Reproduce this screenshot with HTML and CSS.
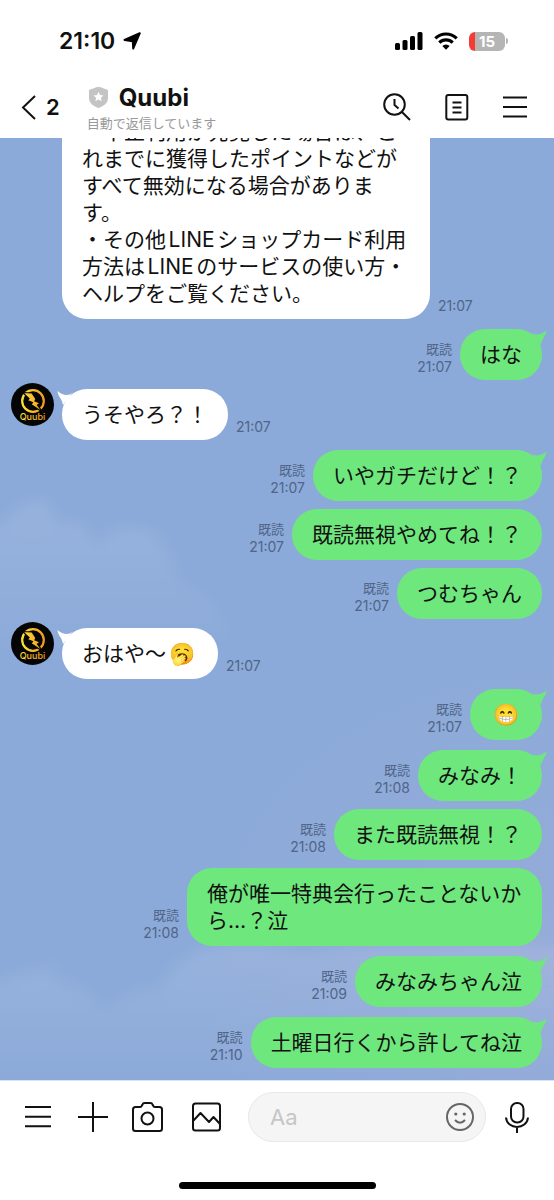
FILE: index.html
```
<!DOCTYPE html>
<html lang="ja">
<head>
<meta charset="utf-8">
<meta name="viewport" content="width=device-width, initial-scale=1">
<title>Quubi</title>
<link rel="stylesheet" href="styles.css">
</head>
<body>
<svg class="defs" aria-hidden="true">
  <defs>
    <linearGradient id="gold" x1="0" y1="0" x2="1" y2="0">
      <stop offset="0" stop-color="#fbe03a"/><stop offset="1" stop-color="#f29a1f"/>
    </linearGradient>
    <symbol id="tail-out" viewBox="0 0 16 16"><path d="M0 3C3 7 10 6 15.500 1.500C15 7 11 9 10 16Z"/></symbol>
    <symbol id="tail-in" viewBox="0 0 16 16"><path d="M16 3C13 7 6 7 .5 2C1 8 5 9 6 16Z"/></symbol>
    <symbol id="logo" viewBox="0 0 43 43">
      <circle cx="21.500" cy="21.500" r="21.500" fill="#050505"/>
      <circle cx="22" cy="18" r="10.800" fill="none" stroke="url(#gold)" stroke-width="2.200"/>
      <path d="M11.500 9.500L21 10L25 16L24 18L29 20L26.500 22L32 29.500L20 21.500L21.500 19.500L16.500 17.500L18 15.500Z" fill="url(#gold)" stroke="#050505" stroke-width="1.200"/>
      <text x="21.500" y="37" class="logo-text" text-anchor="middle" fill="url(#gold)">Quubi</text>
    </symbol>
  </defs>
</svg>

<header class="top">
  <div class="status">
    <span class="clock">21:10</span>
    <svg class="arrow" width="19" height="18" viewBox="0 0 19 18"><path d="M1.500 8L16.800 1.200L10.200 16.500L9.800 9.200Z" stroke="#000" stroke-width="2" stroke-linejoin="round"/></svg>
    <div class="indicators">
      <svg width="28" height="18" viewBox="0 0 28 18"><rect x="0" y="11" width="5" height="7" rx="1.500"/><rect x="7.500" y="8" width="5" height="10" rx="1.500"/><rect x="15" y="4" width="5" height="14" rx="1.500"/><rect x="22.500" y="0" width="5" height="18" rx="1.500"/></svg>
      <svg width="24" height="18" viewBox="0 0 24 18" fill="none" stroke="#000" stroke-width="3.200"><path d="M1.300 6.300a15.500 15.500 0 0 1 21.400 0"/><path d="M5.300 10.600a9.600 9.600 0 0 1 13.400 0"/><path d="M8.300 14a5.300 5.300 0 0 1 7.400 0L12 17.700z" fill="#000" stroke="none"/></svg>
      <div class="battery"><span class="cell">15</span><i class="cap"></i></div>
    </div>
  </div>
  <div class="bar">
    <button class="back" aria-label="戻る"><svg width="15" height="25" viewBox="0 0 15 25" fill="none" stroke="#111" stroke-width="2"><path d="M14 1L2 12.500L14 24"/></svg><span>2</span></button>
    <div class="peer">
      <div class="name">
        <svg width="19" height="21" viewBox="0 0 19 21"><path d="M0 3C4 2 6 0 9.500 0S15 2 19 3V11C19 16 15 19 9.500 21C4 19 0 16 0 11Z" fill="#c4c4c6"/><path d="M9.500 4.800l1.500 3.200 3.500.4-2.600 2.400.7 3.500-3.100-1.800-3.100 1.800.7-3.500-2.600-2.400 3.500-.4z" fill="#fff"/></svg>
        <h1>Quubi</h1>
      </div>
      <p class="note">自動で返信しています</p>
    </div>
    <div class="actions">
      <button aria-label="検索"><svg width="28" height="28" viewBox="0 0 28 28"><circle cx="11.500" cy="11.500" r="10.300"/><path d="M18.700 18.700L27 27M11.500 6v6l4 3.500"/></svg></button>
      <button aria-label="ノート"><svg width="24" height="28" viewBox="0 0 24 28"><rect x="1.300" y="2" width="21" height="24.500" rx="2"/><path d="M7.500 9.500h9M7.500 14.500h9M7.500 19.500h9"/></svg></button>
      <button aria-label="メニュー"><svg width="24" height="24" viewBox="0 0 24 24"><path d="M0 2.500h24M0 12h24M0 21.500h24"/></svg></button>
    </div>
  </div>
</header>

<main class="chat">
  <svg class="sky" viewBox="0 0 554 942" preserveAspectRatio="none" aria-hidden="true">
    <defs>
      <filter id="soft" x="-20%" y="-20%" width="140%" height="140%"><feGaussianBlur stdDeviation="7"/></filter>
      <linearGradient id="fade" x1="0" y1="0" x2="0" y2="1"><stop offset="0" stop-color="#fff" stop-opacity=".1"/><stop offset="1" stop-color="#fff" stop-opacity="0"/></linearGradient>
      <radialGradient id="haze"><stop offset="0" stop-color="#a0acd8" stop-opacity=".5"/><stop offset="1" stop-color="#a0acd8" stop-opacity="0"/></radialGradient>
    </defs>
    <ellipse cx="554" cy="820" rx="360" ry="300" fill="url(#haze)"/>
    <g fill="url(#fade)" filter="url(#soft)">
      <path d="M-20 395Q5 390 18 370Q35 360 50 366Q52 390 66 385Q85 380 90 400Q100 410 108 395Q130 384 155 396Q172 415 178 445Q220 460 230 500L-20 520Z"/>
      <path d="M-20 852Q20 832 45 834L52 822L56 844Q85 844 105 874Q130 848 158 852Q175 820 205 812Q250 800 300 815Q420 800 580 810V942H-20Z"/>
    </g>
  </svg>

  <div class="row in follow">
    <div class="bubble">・不正利用が発覚した場合は、これまでに獲得したポイントなどがすべて無効になる場合があります。<br>・その他LINEショップカード利用方法はLINEのサービスの使い方・ヘルプをご覧ください。</div>
    <div class="stamp"><time>21:07</time></div>
  </div>
  <div class="row out first">
    <div class="stamp"><span>既読</span><time>21:07</time></div>
    <div class="bubble">はな<svg class="tail"><use href="#tail-out"/></svg></div>
  </div>
  <div class="row in">
    <svg class="avatar" role="img" aria-label="Quubi"><use href="#logo"/></svg>
    <div class="bubble">うそやろ？！<svg class="tail"><use href="#tail-in"/></svg></div>
    <div class="stamp"><time>21:07</time></div>
  </div>
  <div class="row out first">
    <div class="stamp"><span>既読</span><time>21:07</time></div>
    <div class="bubble">いやガチだけど！？<svg class="tail"><use href="#tail-out"/></svg></div>
  </div>
  <div class="row out">
    <div class="stamp"><span>既読</span><time>21:07</time></div>
    <div class="bubble">既読無視やめてね！？</div>
  </div>
  <div class="row out">
    <div class="stamp"><span>既読</span><time>21:07</time></div>
    <div class="bubble">つむちゃん</div>
  </div>
  <div class="row in">
    <svg class="avatar" role="img" aria-label="Quubi"><use href="#logo"/></svg>
    <div class="bubble">おはや〜<span class="emoji">🥱</span><svg class="tail"><use href="#tail-in"/></svg></div>
    <div class="stamp"><time>21:07</time></div>
  </div>
  <div class="row out first">
    <div class="stamp"><span>既読</span><time>21:07</time></div>
    <div class="bubble"><span class="emoji">😁</span><svg class="tail"><use href="#tail-out"/></svg></div>
  </div>
  <div class="row out first">
    <div class="stamp"><span>既読</span><time>21:08</time></div>
    <div class="bubble">みなみ！<svg class="tail"><use href="#tail-out"/></svg></div>
  </div>
  <div class="row out">
    <div class="stamp"><span>既読</span><time>21:08</time></div>
    <div class="bubble">また既読無視！？</div>
  </div>
  <div class="row out">
    <div class="stamp"><span>既読</span><time>21:08</time></div>
    <div class="bubble">俺が唯一特典会行ったことないから…？泣</div>
  </div>
  <div class="row out first">
    <div class="stamp"><span>既読</span><time>21:09</time></div>
    <div class="bubble">みなみちゃん泣<svg class="tail"><use href="#tail-out"/></svg></div>
  </div>
  <div class="row out first">
    <div class="stamp"><span>既読</span><time>21:10</time></div>
    <div class="bubble">土曜日行くから許してね泣<svg class="tail"><use href="#tail-out"/></svg></div>
  </div>
</main>

<footer class="compose">
  <div class="tools">
    <button aria-label="メニュー"><svg width="26" height="30" viewBox="0 0 26 30"><path d="M0 5h26M0 14.700h26M0 24.300h26"/></svg></button>
    <button class="plus" aria-label="追加"><svg width="30" height="30" viewBox="0 0 30 30"><path d="M0 15h30M15 0v30"/></svg></button>
    <button class="camera" aria-label="カメラ"><svg width="31" height="30" viewBox="0 0 31 30"><path d="M3.500 5H8q1.500 0 2-1.500L10.500 2.500Q11 1 12.500 1H18.500Q20 1 20.500 2.500L21 3.500Q21.500 5 23 5H27.500Q30 5 30 7.500V26.500Q30 29 27.500 29H3.500Q1 29 1 26.500V7.500Q1 5 3.500 5Z"/><circle cx="15.500" cy="16.500" r="6"/></svg></button>
    <button class="photo" aria-label="写真"><svg width="29" height="30" viewBox="0 0 29 30"><rect x="1" y="1.500" width="27" height="27" rx="2.500"/><path d="M1.500 18.500L8.500 11L17 20L21.500 15L28 22"/></svg></button>
    <div class="field">
      <input type="text" placeholder="Aa" aria-label="メッセージ">
      <button aria-label="スタンプ"><svg width="28" height="28" viewBox="0 0 28 28"><circle cx="14" cy="14" r="13"/><path d="M9 17q5 5.500 10 0"/><circle class="eye" cx="9.800" cy="11" r="1.600"/><circle class="eye" cx="18.200" cy="11" r="1.600"/></svg></button>
    </div>
    <button class="mic" aria-label="音声"><svg width="24" height="31" viewBox="0 0 24 31"><rect x="6" y="1" width="12.500" height="19.500" rx="6"/><path d="M1 15.500C2 28 22 28 23 15.500M12 25V31"/></svg></button>
  </div>
  <div class="home"></div>
</footer>
</body>
</html>
```
FILE: styles.css
```
* { box-sizing: border-box; }
body {
  margin: 0;
  height: 100vh;
  display: flex;
  flex-direction: column;
  background: #fff;
  color: #111;
  font-family: Inter, "Noto Sans CJK JP", sans-serif;
}
.defs { position: absolute; width: 0; height: 0; }
svg { display: block; flex: none; }
button { border: 0; padding: 0; background: none; color: inherit; font: inherit; flex: none; }
h1, p { margin: 0; }

.top { position: relative; z-index: 1; flex: none; background: #fff; }
.status { display: flex; align-items: center; padding: 27px 46px 0 59px; height: 55px; }
.clock { font-size: 23px; line-height: 28px; font-weight: 600; }
.arrow { margin-left: 8px; }
.indicators { display: flex; align-items: center; gap: 11px; margin-left: auto; }
.battery { display: flex; align-items: center; gap: 1px; }
.cell {
  width: 36px; height: 19px; border-radius: 6px;
  background: linear-gradient(90deg, #f63b35 6px, #b5b5b5 6px);
  color: #fff; font-size: 15px; line-height: 19px; font-weight: 700; text-align: center;
}
.cap { width: 2px; height: 6px; border-radius: 0 2px 2px 0; background: #b5b5b5; }

.bar { display: flex; align-items: center; padding: 24px 27px 3px 21px; height: 83px; }
.back { display: flex; align-items: center; gap: 10px; font-size: 22px; line-height: 26px; font-weight: 600; }
.peer { margin-left: 27px; }
.name { display: flex; align-items: center; gap: 11px; padding-left: 2px; }
.name h1 { font-size: 24px; line-height: 32px; font-weight: 700; }
.note { color: #999; font-size: 13px; line-height: 19px; }
.actions { display: flex; align-items: center; gap: 34px; margin-left: auto; }
.actions svg, .tools svg { fill: none; stroke: #111; stroke-width: 2; stroke-linejoin: round; }

.chat {
  position: relative;
  flex: 1;
  min-height: 0;
  overflow: hidden;
  display: flex;
  flex-direction: column;
  justify-content: flex-end;
  padding: 0 12px 12px 11px;
  background: #8caad9;
}
.sky { position: absolute; inset: 0; width: 100%; height: 100%; }
.row { position: relative; flex: none; display: flex; align-items: flex-end; gap: 8px; margin-top: 8px; }
.row.first { margin-top: 10px; }
.out { justify-content: flex-end; }
.in { margin-top: 3px; }
.in .bubble { margin-top: 6px; background: #fff; max-width: 368px; }
.follow { padding-left: 51px; }
.avatar { width: 43px; height: 43px; align-self: flex-start; }
.logo-text { font: 500 9px Inter, sans-serif; }
.bubble {
  position: relative;
  max-width: 355px;
  padding: 12px 20px;
  border-radius: 25px;
  background: #6ee87d;
  font-size: 21px;
  line-height: 27px;
  text-autospace: normal;
}
.tail { position: absolute; top: 0; width: 16px; height: 16px; }
.out .tail { right: -5px; fill: #6ee87d; }
.in .tail { left: -5px; fill: #fff; }
.emoji { display: inline-block; height: 27px; vertical-align: top; padding: 0 3px; }
.stamp {
  flex: none;
  display: flex;
  flex-direction: column;
  padding-bottom: 5px;
  color: #506587;
  font-size: 13px;
  line-height: 17px;
}
.stamp time { font-size: 14px; }
.out .stamp { align-items: flex-end; }

.compose { flex: none; background: #fff; border-top: 1px solid #d5e4f6; }
.tools { display: flex; align-items: center; padding: 11px 25px 0; }
.plus { margin-left: 27px; }
.camera { margin-left: 24px; }
.photo { margin-left: 29px; }
.field {
  flex: 1;
  min-width: 0;
  height: 50px;
  display: flex;
  align-items: center;
  margin-left: 27px;
  padding: 0 11px 0 21px;
  border: 1px solid #e8e8e8;
  border-radius: 25px;
  background: #f5f5f5;
}
.field input { flex: 1; min-width: 0; border: 0; padding: 0; outline: 0; background: none; font: 22px Inter, sans-serif; }
.field input::placeholder { color: #c6c6c6; }
.field svg { stroke: #666; }
.field .eye { fill: #666; stroke: none; }
.mic { margin-left: 19px; }
.home { width: 197px; height: 7px; margin: 40px auto 11px; border-radius: 4px; background: #000; }
```
